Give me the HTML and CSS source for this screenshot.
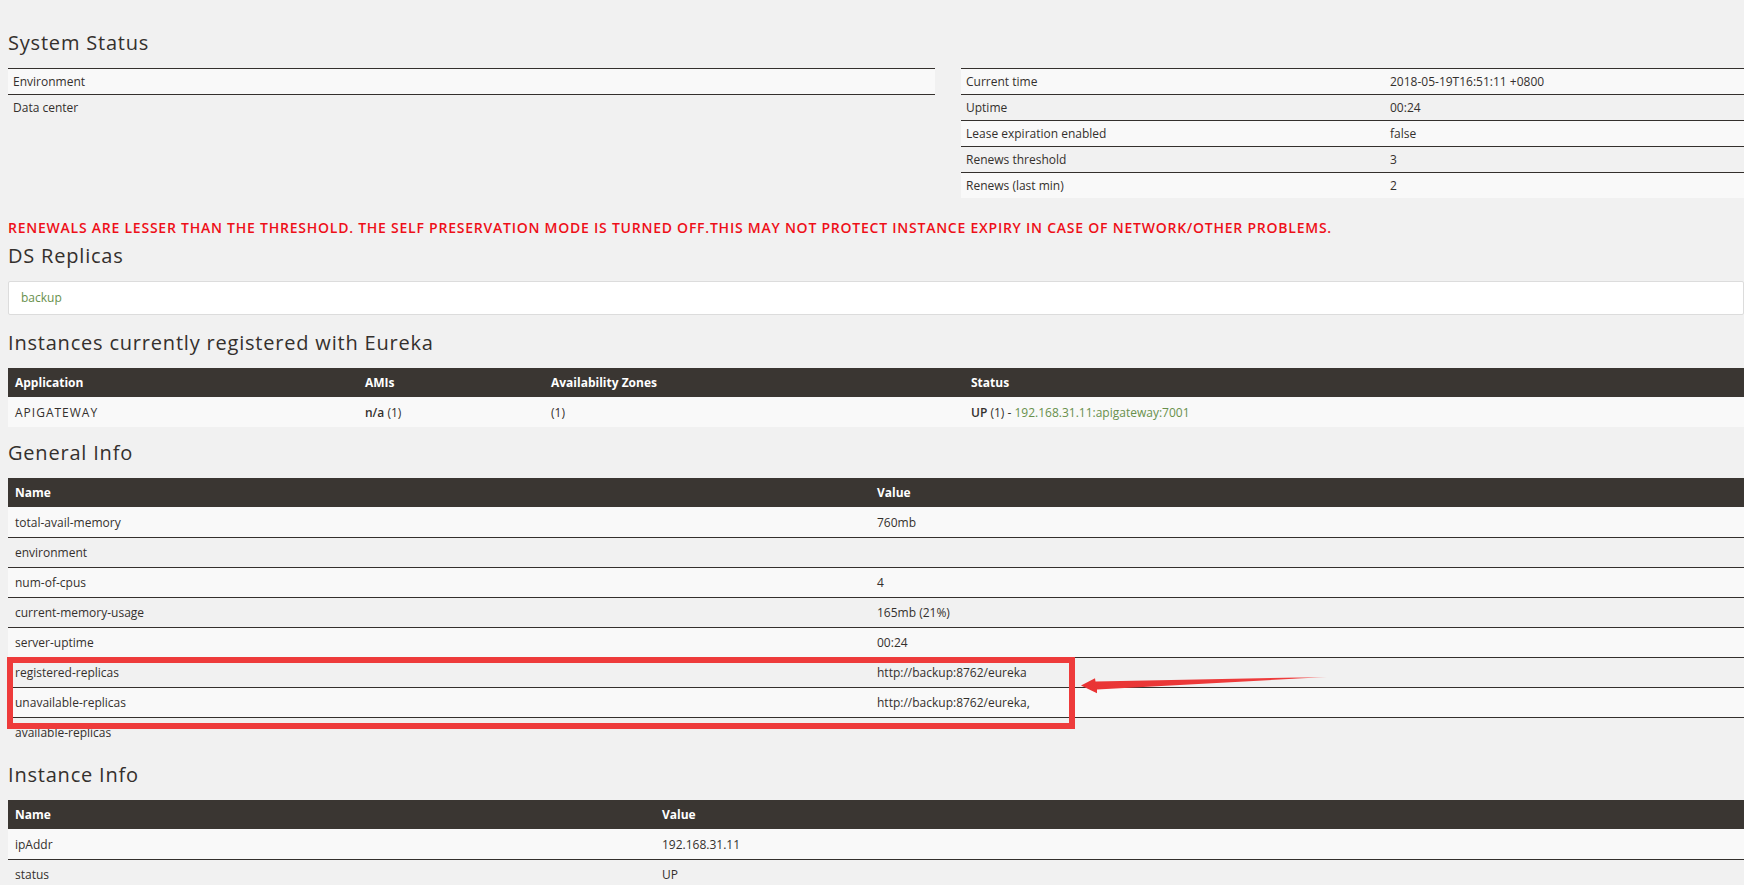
FILE: index.html
```html
<!DOCTYPE html>
<html lang="en">
<head>
<meta charset="utf-8">
<title>Eureka</title>
<link rel="stylesheet" href="styles.css">
</head>
<body>
<div class="page">
  <h1 class="title">System Status</h1>
  <div class="status-row">
    <div class="col-left">
      <table class="kv">
        <tr class="odd"><td>Environment</td><td></td></tr>
        <tr><td>Data center</td><td></td></tr>
      </table>
    </div>
    <div class="col-right">
      <table class="kv">
        <colgroup><col class="kv-label"><col></colgroup>
        <tr class="odd"><td>Current time</td><td>2018-05-19T16:51:11 +0800</td></tr>
        <tr><td>Uptime</td><td>00:24</td></tr>
        <tr class="odd"><td>Lease expiration enabled</td><td>false</td></tr>
        <tr><td>Renews threshold</td><td>3</td></tr>
        <tr class="odd"><td>Renews (last min)</td><td>2</td></tr>
      </table>
    </div>
  </div>

  <h4 class="warning">RENEWALS ARE LESSER THAN THE THRESHOLD. THE SELF PRESERVATION MODE IS TURNED OFF.THIS MAY NOT PROTECT INSTANCE EXPIRY IN CASE OF NETWORK/OTHER PROBLEMS.</h4>

  <h2 class="title title-tight">DS Replicas</h2>
  <ul class="list-group">
    <li class="list-group-item"><a class="link" href="#">backup</a></li>
  </ul>

  <h2 class="title">Instances currently registered with Eureka</h2>
  <table class="grid">
    <colgroup><col class="c-app"><col class="c-ami"><col class="c-zone"><col></colgroup>
    <thead>
      <tr><th>Application</th><th>AMIs</th><th>Availability Zones</th><th>Status</th></tr>
    </thead>
    <tbody>
      <tr class="odd"><td><b class="appname">APIGATEWAY</b></td><td><b>n/a</b> (1)</td><td>(1)</td><td><b>UP</b> (1) - <a class="link" href="#">192.168.31.11:apigateway:7001</a></td></tr>
    </tbody>
  </table>

  <h2 class="title">General Info</h2>
  <table class="grid">
    <colgroup><col class="c-gname"><col></colgroup>
    <thead>
      <tr><th>Name</th><th>Value</th></tr>
    </thead>
    <tbody>
      <tr class="odd"><td>total-avail-memory</td><td>760mb</td></tr>
      <tr><td>environment</td><td></td></tr>
      <tr class="odd"><td>num-of-cpus</td><td>4</td></tr>
      <tr><td>current-memory-usage</td><td>165mb (21%)</td></tr>
      <tr class="odd"><td>server-uptime</td><td>00:24</td></tr>
      <tr><td>registered-replicas</td><td>http://backup:8762/eureka</td></tr>
      <tr class="odd"><td>unavailable-replicas</td><td>http://backup:8762/eureka,</td></tr>
      <tr><td>available-replicas</td><td></td></tr>
    </tbody>
  </table>

  <h2 class="title title-loose">Instance Info</h2>
  <table class="grid">
    <colgroup><col class="c-iname"><col></colgroup>
    <thead>
      <tr><th>Name</th><th>Value</th></tr>
    </thead>
    <tbody>
      <tr class="odd"><td>ipAddr</td><td>192.168.31.11</td></tr>
      <tr><td>status</td><td>UP</td></tr>
    </tbody>
  </table>

  <div class="annot-box"></div>
  <svg class="annot-arrow" width="260" height="30" viewBox="1075 670 260 30" xmlns="http://www.w3.org/2000/svg">
    <defs>
      <linearGradient id="fade" x1="1081" y1="0" x2="1330" y2="0" gradientUnits="userSpaceOnUse">
        <stop offset="0" stop-color="#e93434"/>
        <stop offset="0.85" stop-color="#ee3d3d"/>
        <stop offset="1" stop-color="#f36a6a" stop-opacity="0.6"/>
      </linearGradient>
    </defs>
    <polygon fill="url(#fade)" points="1081,685.5 1095,678.3 1095.5,681.5 1327,677 1097,689.5 1097,693.3"/>
  </svg>
</div>
</body>
</html>
```

FILE: styles.css
```css
html, body {
  margin: 0;
  padding: 0;
  overflow: hidden;
  background: #f1f1f1;
}

body {
  font-family: "Open Sans", "Noto Sans", sans-serif;
  font-size: 12px;
  color: #34302d;
}

.page {
  position: relative;
  padding: 31px 0 0 8px;
}

.title {
  margin: 14px 0 13px;
  font-family: "Open Sans", sans-serif;
  font-weight: 500;
  font-size: 20px;
  line-height: 24px;
  letter-spacing: 0.8px;
  color: #34302d;
}

h1.title {
  margin-top: 0;
}

.title.title-tight {
  margin-top: 0;
}

.title.title-loose {
  margin-top: 16px;
}

.status-row {
  display: flex;
  gap: 26px;
  align-items: flex-start;
}

.col-left {
  width: 927px;
  flex: none;
}

.col-right {
  flex: 1;
  min-width: 0;
}

table {
  border-collapse: separate;
  border-spacing: 0;
  width: 100%;
}

.kv td {
  border-top: 1px solid #34302d;
  padding: 4px 5px;
  line-height: 17px;
  white-space: nowrap;
}

.kv .kv-label {
  width: 424px;
}

tr.odd td {
  background: #f9f9f9;
}

.warning {
  margin: 21px 0 7px;
  font-size: 14px;
  line-height: 18px;
  font-weight: 600;
  color: #ee0f18;
  letter-spacing: 0.76px;
  white-space: nowrap;
}

.list-group {
  list-style: none;
  margin: 0 0 16px;
  padding: 0;
}

.list-group-item {
  background: #fff;
  border: 1px solid #dcdcdc;
  border-radius: 2px;
  padding: 7px 12px;
  line-height: 18px;
}

.link {
  color: #68904c;
  text-decoration: none;
}

.grid th {
  background: #3a3632;
  color: #fff;
  font-weight: 700;
  text-align: left;
  padding: 6px 7px;
  line-height: 17px;
}

.grid td {
  border-top: 1px solid #34302d;
  padding: 6px 7px 5px;
  line-height: 18px;
  white-space: nowrap;
}

.grid tbody tr:first-child td {
  border-top-color: #f9f9f9;
}

.grid b {
  font-weight: 600;
}

.grid b.appname {
  font-weight: 500;
  letter-spacing: 1px;
}

.c-app { width: 350px; }
.c-ami { width: 186px; }
.c-zone { width: 420px; }
.c-gname { width: 862px; }
.c-iname { width: 647px; }

.annot-box {
  position: absolute;
  left: 7px;
  top: 657px;
  width: 1068px;
  height: 72px;
  box-sizing: border-box;
  border: 6px solid #ee3b3b;
  pointer-events: none;
}

.annot-arrow {
  position: absolute;
  left: 1075px;
  top: 670px;
  pointer-events: none;
}
```
